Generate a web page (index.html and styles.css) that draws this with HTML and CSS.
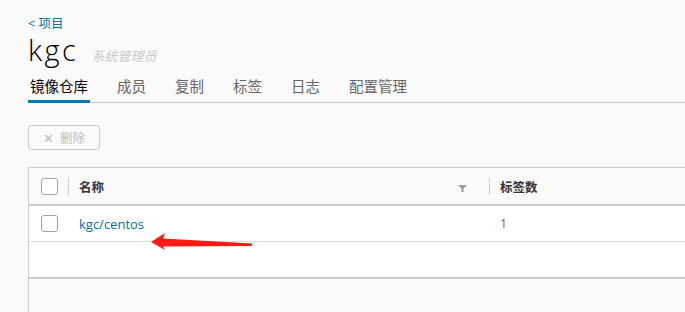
FILE: index.html
```html
<!DOCTYPE html>
<html lang="zh">
<head>
  <meta charset="UTF-8">
  <title>kgc - 镜像仓库</title>
  <link rel="stylesheet" href="styles.css">
</head>
<body>
  <div class="page">
    <a class="back" href="#">&lt; 项目</a>
    <div class="title-row">
      <h1>kgc</h1>
      <span class="role">系统管理员</span>
    </div>

    <!-- 标签页 -->
    <div class="tabs">
      <span class="tab active">镜像仓库</span>
      <span class="tab">成员</span>
      <span class="tab">复制</span>
      <span class="tab">标签</span>
      <span class="tab">日志</span>
      <span class="tab">配置管理</span>
    </div>

    <button class="btn-delete" disabled><span class="x">✕</span> 删除</button>

    <div class="datagrid">
      <div class="row head">
        <div class="cell check"><span class="box"></span></div>
        <div class="cell name">名称
          <svg class="filter" width="9" height="7" viewBox="0 0 9 7"><polygon points="0,0 9,0 5.5,3.5 5.5,7 3.5,7 3.5,3.5" fill="#9a9a9a"/></svg>
        </div>
        <div class="cell sep">标签数</div>
      </div>
      <div class="row">
        <div class="cell check"><span class="box"></span></div>
        <div class="cell"><a class="link" href="#">kgc/centos</a></div>
        <div class="cell num">1</div>
      </div>
      <div class="empty"></div>
      <div class="foot"></div>
    </div>
  </div>

  <!-- 标注箭头 -->
  <svg class="arrow" width="685" height="312" viewBox="0 0 685 312">
    <polygon points="151,242 165,233 163,238.5 252,243.5 252,246 163,246.5 165,250" fill="#ff1a12"/>
  </svg>
</body>
</html>
```

FILE: styles.css
```css
body {
  margin: 0;
  background: #fafafa;
  font-family: "Open Sans", "Noto Sans CJK SC", sans-serif;
  color: #333;
  overflow: hidden;
  height: 312px;
}
.page {
  padding: 16px 0 0 28px;
}
.back {
  display: block;
  font-size: 12.5px;
  line-height: 16px;
  color: #0072a3;
  text-decoration: none;
}
.title-row {
  display: flex;
  align-items: baseline;
  height: 30px;
  margin-top: 3px;
}
h1 {
  margin: 0;
  font-size: 29px;
  font-weight: 300;
  line-height: 30px;
  color: #000;
  letter-spacing: 2.5px;
}
.role {
  margin-left: 13px;
  font-size: 13px;
  font-style: italic;
  color: #c8c8c8;
}
.tabs {
  display: flex;
  margin-top: 10px;
  border-bottom: 1px solid #ccc;
  height: 27px;
}
.tab {
  font-size: 14.5px;
  line-height: 24px;
  color: #666;
  margin-right: 29px;
}
.tab.active {
  color: #000;
  border-bottom: 3px solid #0079b8;
  padding: 0 2px;
  margin-right: 27px;
  height: 25px;
}
.btn-delete {
  display: block;
  margin-top: 22px;
  width: 72px;
  height: 25px;
  border: 1px solid #ccc;
  border-radius: 3px;
  background: #fafafa;
  color: #bbb;
  font-family: inherit;
  font-size: 12.5px;
  padding: 0;
}
.btn-delete .x {
  font-size: 13px;
  margin-right: 3px;
}
.datagrid {
  margin-top: 17px;
  border: 1px solid #ccc;
  border-right: none;
  background: #fff;
  height: 200px;
}
.row {
  display: grid;
  grid-template-columns: 39px 421px 1fr;
  height: 35px;
  border-bottom: 1px solid #ddd;
  font-size: 12.5px;
}
.row.head {
  height: 36px;
  background: #fafafa;
  border-bottom: 2px solid #ccc;
  color: #333;
  font-weight: 600;
}
.cell {
  display: flex;
  align-items: center;
  padding-left: 11px;
}
.cell.check {
  padding-left: 12px;
}
.box {
  width: 15px;
  height: 15px;
  border: 1px solid #a3a3a3;
  border-radius: 3px;
  background: #fff;
}
.head .name,
.head .sep {
  background: linear-gradient(#ccc, #ccc) left center / 1px 17px no-repeat;
}
.name {
  position: relative;
}
.filter {
  position: absolute;
  right: 22px;
  top: 17px;
}
.link {
  color: #0072a3;
  text-decoration: none;
  font-size: 13px;
}
.num {
  color: #8a5a2a;
}
.empty {
  height: 35px;
  border-bottom: 2px solid #ccc;
}
.foot {
  background: #fafafa;
  height: 100px;
}
.arrow {
  position: absolute;
  left: 0;
  top: 0;
  pointer-events: none;
}
```
